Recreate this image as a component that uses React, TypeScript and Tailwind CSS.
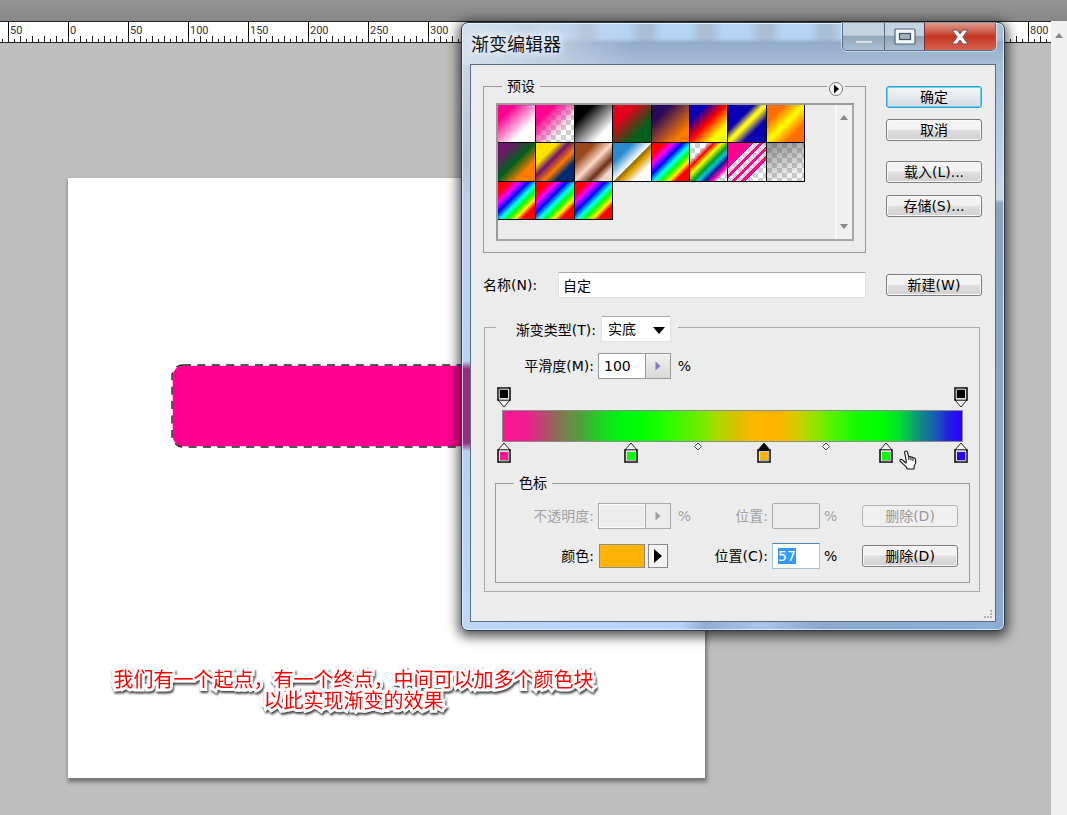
import { useEffect, useRef, type ReactNode } from 'react';

const FONT = 'font-["DejaVu_Sans","Noto_Sans_CJK_SC",sans-serif]';

const RULER = ['50', '0', '50', '100', '150', '200', '250', '300', '', '', '', '', '', '', '', '', '', '800'];

const CHECKER =
  'repeating-conic-gradient(#cfcfcf 0% 25%, #ffffff 0% 50%) 0 0 / 10px 10px';

const SPECTRUM =
  'linear-gradient(135deg,#f00 16%,#f0f 28%,#00f 41%,#0ff 53%,#0f0 63%,#ff0 73%,#f00 82%)';

const PRESETS: { name: string; background: string }[] = [
  { name: '前景色到背景色', background: 'linear-gradient(135deg,#ff0090 22%,#fff 70%)' },
  { name: '前景色到透明', background: `linear-gradient(135deg,#ff0090 24%,rgba(255,0,144,0) 70%), ${CHECKER}` },
  { name: '黑白', background: 'linear-gradient(135deg,#000 24%,#fff 76%)' },
  { name: '红绿', background: 'linear-gradient(135deg,#e2001a 28%,#00601b 72%)' },
  { name: '紫橙', background: 'linear-gradient(135deg,#290a59 24%,#ff7c00 80%)' },
  { name: '蓝红黄', background: 'linear-gradient(135deg,#0a00b2 22%,#ff0000 48%,#fffc00 76%)' },
  { name: '蓝黄蓝', background: 'linear-gradient(135deg,#0a00b2 34%,#fff71c 48% 52%,#0a00b2 70%)' },
  { name: '橙黄橙', background: 'linear-gradient(135deg,#ff6e02 24%,#ffff00 50%,#ff6d00 76%)' },
  { name: '紫绿橙', background: 'linear-gradient(135deg,#6f156c 18%,#00601b 48%,#fd7c00 74%)' },
  { name: '黄紫橙蓝', background: 'linear-gradient(135deg,#ffe200 28%,#6f156c 43%,#fd7c00 60%,#002874 76%)' },
  { name: '铜色', background: 'linear-gradient(135deg,#97461a 26%,#fbd8c5 50%,#6c2e16 70%,#efdbcd 84%)' },
  { name: '铬黄', background: 'linear-gradient(135deg,#298acc 26%,#fff 50%,#906a00 52%,#d99f00 60%,#fff 78%)' },
  { name: '色谱', background: SPECTRUM },
  {
    name: '透明彩虹',
    background: `linear-gradient(135deg,rgba(255,0,0,0) 24%,#f00 32%,#ff0 42%,#00a030 54%,#00c8d8 62%,#0020a0 70%,#f0a 80%,rgba(255,0,160,0) 88%), ${CHECKER}`,
  },
  {
    name: '透明条纹',
    background: `linear-gradient(135deg,#ff0090 34%,transparent 34% 41%,#ff0090 41% 47%,transparent 47% 54%,#ff0090 54% 60%,transparent 60% 67%,#ff0090 67% 73%,transparent 73%), ${CHECKER}`,
  },
  { name: '中灰密度', background: `linear-gradient(160deg,rgba(80,80,80,.6) 5%,rgba(140,140,140,.1) 80%), ${CHECKER}` },
  { name: '色谱 2', background: SPECTRUM },
  { name: '色谱 3', background: SPECTRUM },
  { name: '色谱 4', background: SPECTRUM },
];

const COLOR_STOPS = [
  { at: 0, color: '#ff1493' },
  { at: 27.8, color: '#00ff00' },
  { at: 57, color: '#ffb400', active: true },
  { at: 83.5, color: '#00ff00' },
  { at: 100, color: '#2800ff' },
];

const MIDPOINTS = [42.5, 70.4];

function PushButton({ children, primary, disabled }: { children: ReactNode; primary?: boolean; disabled?: boolean }) {
  const tone = disabled
    ? 'border-[#b4b4b4] bg-[#f0f0f0] text-[#989898]'
    : primary
      ? 'border-[#2f9fd8] bg-linear-to-b from-[#f4f6f7] via-[#e6eaec] to-[#cfdbe2] text-black shadow-[inset_0_0_0_1px_#6fd2f5]'
      : 'border-[#7c7c7c] bg-linear-to-b from-[#f3f3f3] from-45% via-[#e0e0e0] via-50% to-[#d0d0d0] text-black shadow-[inset_0_0_0_1px_#fafafa]';
  return (
    <button type="button" disabled={disabled} className={`flex h-[22px] w-24 items-center justify-center rounded-[3px] border text-sm leading-5 ${tone}`}>
      {children}
    </button>
  );
}

function SpinArrow({ disabled }: { disabled?: boolean }) {
  return (
    <svg viewBox="0 0 6 10" className="h-2.5 w-1.5">
      <path d="M0.5 0.5 L5.5 5 L0.5 9.5 Z" fill={disabled ? '#a0a0a0' : '#7f7fc0'} />
    </svg>
  );
}

function StopMarker({ color, active, flipped }: { color: string; active?: boolean; flipped?: boolean }) {
  return (
    <svg viewBox="0 0 14 21" className={flipped ? 'h-[21px] w-3.5 rotate-180' : 'h-[21px] w-3.5'}>
      <path d="M1 8 L7 1 L13 8 Z" fill={active ? '#000' : '#f4f4f4'} stroke="#222" strokeWidth="1" />
      <rect x="1" y="8" width="12" height="12" fill="#e4e4e4" stroke="#111" strokeWidth="1.6" />
      <path d="M2 8.4 H12" stroke={active ? '#000' : '#aaa'} strokeWidth="1.4" />
      <path d="M3 19 H12 V10" fill="none" stroke="#777" strokeWidth="1" />
      <rect x="3" y="10" width="8" height="8" fill={color} />
    </svg>
  );
}

function Ruler() {
  return (
    <div className="relative flex h-[22px] overflow-hidden border-y border-[#222] bg-white pl-2">
      <div className="absolute inset-x-0 bottom-0 h-[3px] bg-[repeating-linear-gradient(to_right,transparent_0_2px,#222_2px_3px,transparent_3px_6px)]" />
      <div className="absolute inset-x-0 bottom-0 h-1.5 bg-[repeating-linear-gradient(to_right,transparent_0_8px,#222_8px_9px,transparent_9px_12px)]" />
      {RULER.map((label, i) => (
        <span key={i} className='h-full w-15 shrink-0 border-l border-black pl-px font-["Roboto",sans-serif] text-[11px] leading-[18px] text-[#333]'>
          {label}
        </span>
      ))}
    </div>
  );
}

function Artboard() {
  return (
    <section aria-label="画布" className="relative mt-[135px] ml-[68px] h-[600px] w-[637px] bg-white shadow-[1px_3px_4px_1px_rgba(0,0,0,0.4)]">
      <svg className="absolute top-[186px] left-[103px] h-[85px] w-[430px]">
        <rect x="1" y="1" width="428" height="82" rx="11" fill="#ff0092" stroke="#fff" strokeWidth="1.4" />
        <rect x="1" y="1" width="428" height="82" rx="11" fill="none" stroke="#222" strokeWidth="1.4" strokeDasharray="8 6.4" />
      </svg>
      <p
        lang="zh-CN"
        className='absolute top-[490px] left-0 w-[571px] text-center font-["Noto_Sans_CJK_SC",sans-serif] text-xl leading-[21px] text-[#ff0000] drop-shadow-[1px_2px_1px_rgba(0,0,0,0.75)] [-webkit-text-stroke:6px_white] [paint-order:stroke_fill]'
      >
        我们有一个起点，有一个终点，中间可以加多个颜色块
        <br />
        以此实现渐变的效果
      </p>
    </section>
  );
}

function TitleBar() {
  return (
    <header className="flex h-[41px] items-start justify-between">
      <h1 className='pt-2 pl-px font-["Noto_Sans_CJK_SC",sans-serif] text-lg leading-6 text-[#111] [text-shadow:0_0_8px_#fff,0_0_10px_#fff]'>渐变编辑器</h1>
      <div className="flex h-7 overflow-hidden rounded-b-[5px] border border-t-0 border-[#5b6d80] shadow-[0_0_0_1px_rgba(255,255,255,0.45)]">
        <button type="button" aria-label="最小化" className="flex w-[42px] items-end justify-center border-r border-[#5b6d80] bg-linear-to-b from-[#c3d3e2] from-45% via-[#93a7bb] via-50% to-[#aabfd3] pb-1.5">
          <svg viewBox="0 0 18 4" className="h-1 w-[18px]">
            <rect x="0.5" y="0.5" width="17" height="3" fill="#d6dfe8" stroke="#9fb0c0" />
          </svg>
        </button>
        <button type="button" aria-label="最大化" className="flex w-10 items-center justify-center border-r border-[#7b3038] bg-linear-to-b from-[#c3d3e2] from-45% via-[#8fa3b7] via-50% to-[#aabfd3]">
          <svg viewBox="0 0 22 17" className="h-[17px] w-[22px]">
            <rect x="1" y="1" width="20" height="15" rx="1" fill="#f4f6f8" stroke="#56657a" strokeWidth="1.2" />
            <rect x="5.5" y="5.5" width="11" height="6" fill="#a5b0bd" stroke="#445060" strokeWidth="1.2" />
          </svg>
        </button>
        <button type="button" aria-label="关闭" className="flex w-[70px] items-center justify-center bg-linear-to-b from-[#dd9a8e] via-[#c33420] via-50% to-[#d8634e]">
          <svg viewBox="0 0 18 16" className="h-4 w-[18px]">
            <path d="M1 1 H6 L9 5 L12 1 H17 L11.8 8 L17 15 H12 L9 11 L6 15 H1 L6.2 8 Z" fill="#fff" stroke="#6b5560" strokeWidth="1" />
          </svg>
        </button>
      </div>
    </header>
  );
}

function Presets() {
  return (
    <fieldset className="relative min-w-0 flex-1 border border-[#999] pt-1.5 pr-[11px] pb-[11px] pl-3">
      <legend className="ml-1.5 h-[22px] px-[5px] leading-[22px]">预设</legend>
      <button type="button" aria-label="预设菜单" className="absolute -top-4 right-5 flex h-4 w-[18px] items-center justify-center bg-[#ececec]">
        <svg viewBox="0 0 16 16" className="size-4 shrink-0">
          <circle cx="8" cy="8" r="6.5" fill="#f8f8f8" stroke="#777" />
          <path d="M6 3.5 L11 8 L6 12.5 Z" fill="#000" />
        </svg>
      </button>
      <div className="flex h-[138px] justify-between border-2 border-[#a8a8a8] border-t-[#999] border-l-[#999]">
        <div className="grid w-[307px] grid-cols-8 content-start">
          {PRESETS.map((p) => (
            <button
              key={p.name}
              type="button"
              aria-label={p.name}
              className="aspect-square border-r border-b border-black"
              style={{ background: p.background }}
            />
          ))}
        </div>
        <div className="flex w-[17px] flex-col items-center justify-between border-l border-[#f8f8f8] bg-[#f0f0f0] py-2.5">
          <svg viewBox="0 0 8 5" className="h-[5px] w-2">
            <path d="M0 5 L4 0 L8 5 Z" fill="#888" />
          </svg>
          <svg viewBox="0 0 8 5" className="h-[5px] w-2">
            <path d="M0 0 L4 5 L8 0 Z" fill="#888" />
          </svg>
        </div>
      </div>
    </fieldset>
  );
}

function GradientTrack() {
  return (
    <div className="mt-2 mr-4 ml-[17px]">
      <div className="relative mx-0.5 h-[22px]">
        {[0, 100].map((at) => (
          <button key={at} type="button" aria-label={`不透明度色标 ${at}%`} className="absolute top-0 -translate-x-1/2" style={{ left: `${at}%` }}>
            <StopMarker color="#000" flipped />
          </button>
        ))}
      </div>
      <div className="mt-px h-8 border border-[#8a8a8a] bg-[linear-gradient(to_right,#ff1493_0%,#f01c90_5%,#80774f_12.6%,#48a83c_17.6%,#20d020_21%,#00f410_25%,#00ff00_30%,#22ff00_35%,#6eec00_43%,#aadc00_46.6%,#d8c000_50.5%,#ffb800_55%,#ffb400_60%,#d4cc00_64%,#90e400_68%,#50f400_72%,#14fc00_77%,#00ff00_82%,#00e030_86.3%,#109080_90.6%,#1860b0_94%,#2420e0_97%,#2800ff_100%)]" />
      <div className="relative mx-0.5 h-[23px]">
        {COLOR_STOPS.map((s) => (
          <button key={s.at} type="button" aria-label={`颜色色标 ${s.at}%`} className="absolute top-0 -translate-x-1/2" style={{ left: `${s.at}%` }}>
            <StopMarker color={s.color} active={s.active} />
          </button>
        ))}
        {MIDPOINTS.map((at) => (
          <button key={at} type="button" aria-label={`中点 ${at}%`} className="absolute top-0 -translate-x-1/2" style={{ left: `${at}%` }}>
            <svg viewBox="0 0 9 9" className="size-[9px]">
              <path d="M4.5 1 L8 4.5 L4.5 8 L1 4.5 Z" fill="#fff" stroke="#444" />
            </svg>
          </button>
        ))}
        <svg viewBox="0 0 18 20" className="absolute top-2 left-[395px] h-5 w-[18px]">
          <path
            d="M7.2 10.5 L5.6 2.6 Q5.6 1 7 1 Q8.2 1 8.6 2.6 L9.8 7 Q10.6 5.8 11.8 7.2 Q13 6.4 14 8 Q15.6 7.2 16.6 9.6 Q17.4 13 15.2 16 L15 19 H8 L7.6 17.2 L1.2 11.4 Q0.4 9.8 1.8 9.4 Q3 9.2 4.6 11 L7.2 13 Z"
            fill="#fff"
            stroke="#111"
            strokeWidth="1.1"
            strokeLinejoin="round"
          />
          <path d="M9.8 7 V10 M12 7.4 V10.4 M14 8.2 V10.8" stroke="#111" strokeWidth="1" fill="none" />
        </svg>
      </div>
    </div>
  );
}

const ROW = 'grid h-[26px] grid-cols-[98px_73px_16px_73px_48px_34px_96px] items-center gap-x-1 leading-5';

function StopsPanel() {
  const position = useRef<HTMLInputElement>(null);
  useEffect(() => {
    position.current?.focus({ preventScroll: true });
    position.current?.select();
  }, []);
  return (
    <fieldset className="mt-[7px] mr-[9px] ml-2.5 min-w-0 border border-[#999] pt-[9px] pb-[13px]">
      <legend className="ml-[18px] h-[22px] px-[5px] leading-[22px]">色标</legend>
      <div className={`${ROW} text-[#a3a3a3]`}>
        <label htmlFor="opacity" className="text-right">不透明度:</label>
        <div className="flex h-[26px] border border-[#aaa]">
          <input id="opacity" disabled className="w-[46px] border border-[#f8f8f8] bg-[#ececec]" />
          <button type="button" disabled aria-label="调整不透明度" className="flex flex-1 items-center justify-center border-l border-[#aaa]">
            <SpinArrow disabled />
          </button>
        </div>
        <span className="text-right">%</span>
        <label htmlFor="opacity-position" className="text-right">位置:</label>
        <input id="opacity-position" disabled className="h-[26px] w-full rounded-[2px] border border-[#aaa] bg-[#ececec]" />
        <span>%</span>
        <PushButton disabled>删除(D)</PushButton>
      </div>
      <div className={`${ROW} mt-3.5`}>
        <label htmlFor="color" className="text-right">颜色:</label>
        <div className="flex h-6 gap-[3px] pl-px">
          <button id="color" type="button" aria-label="颜色" className="w-[46px] border border-[#8c8c8c] bg-[#ffb405]" />
          <button type="button" aria-label="颜色菜单" className="flex w-5 items-center justify-center border border-[#888] bg-[#f4f4f4]">
            <svg viewBox="0 0 8 14" className="h-3.5 w-2">
              <path d="M0 0 L8 7 L0 14 Z" fill="#000" />
            </svg>
          </button>
        </div>
        <label htmlFor="position" className="col-span-2 text-right">位置(C):</label>
        <input
          id="position"
          ref={position}
          defaultValue="57"
          className="h-[26px] w-full border border-[#a9c4da] border-t-[#4a86b4] bg-white pl-[5px] outline-none selection:bg-[#3399ff] selection:text-white"
        />
        <span>%</span>
        <PushButton>删除(D)</PushButton>
      </div>
    </fieldset>
  );
}

function GradientEditor() {
  return (
    <div
      role="dialog"
      aria-label="渐变编辑器"
      className="absolute top-[22px] left-[461px] w-[544px] rounded-[7px] border border-[#2c3a48] px-2 pb-2 text-sm text-black shadow-[inset_0_0_0_1px_rgba(240,248,255,0.75),0_3px_12px_3px_rgba(0,0,0,0.65)] [background:linear-gradient(#c8d6e5_0,#b5c7da_100px,#bdd3ef_140px,#b8d2f4_296px,#91307a_304px,#91307a_378px,#b6d0f4_386px,#c0daf8)_0_42px/9px_100%_no-repeat,linear-gradient(#a9bfd8_0,#bdd0e4_90px,#cdd9e6_134px,#8ba3bf_138px,#8eaacb_400px,#8aabd2)_100%_42px/9px_100%_no-repeat,linear-gradient(to_right,#bcd7f6_0,#b4d3fa_220px,#8eaed2_242px,#a6c6ea_300px,#88a8cc_360px,#8db0d8)_0_100%/100%_9px_no-repeat,linear-gradient(to_right,rgba(214,226,238,0.95)_0,rgba(200,216,232,0.6)_100px,transparent_170px),linear-gradient(transparent_15px,#93abc9_20px,#a9bfd9_42px),repeating-linear-gradient(to_right,#a9bdd3_0_8px,#b7d4f4_20px_46px,#a9bdd3_60px)]"
    >
      <TitleBar />
      <div className="relative border border-[#5d6c7c] bg-[#ececec] pt-2.5 pr-[13px] pb-[29px] pl-3">
        <div className="flex gap-5">
          <Presets />
          <div className="flex flex-col pt-[11px]">
            <PushButton primary>确定</PushButton>
            <div className="mt-[11px]"><PushButton>取消</PushButton></div>
            <div className="mt-5"><PushButton>载入(L)...</PushButton></div>
            <div className="mt-3"><PushButton>存储(S)...</PushButton></div>
          </div>
        </div>
        <div className="mt-[19px] flex h-[26px] items-center">
          <label htmlFor="name" className="w-[75px] leading-5">名称(N):</label>
          <input id="name" defaultValue="自定" className="h-[26px] min-w-0 flex-1 border border-[#e2e2e2] border-t-[#aaa] bg-white pl-1" />
          <div className="ml-5"><PushButton>新建(W)</PushButton></div>
        </div>
        <fieldset className="mt-[18px] mr-0.5 ml-px min-w-0 border border-[#aaa] pb-2">
          <legend className="ml-[11px] flex h-[22px] items-start pr-[7px]">
            <label htmlFor="kind" className="w-[100px] text-right leading-[28px]">渐变类型(T):</label>
            <span className="relative ml-[5px] flex">
              <select id="kind" defaultValue="solid" className="h-[26px] w-[70px] appearance-none border border-[#e2e2e2] border-t-[#aaa] bg-white pl-1.5">
                <option value="solid">实底</option>
                <option value="noise">杂色</option>
              </select>
              <svg viewBox="0 0 12 7" className="pointer-events-none absolute top-[11px] right-1.5 h-[7px] w-3">
                <path d="M0 0 H12 L6 7 Z" fill="#000" />
              </svg>
            </span>
          </legend>
          <div className="mt-[15px] ml-[11px] flex h-[26px] items-center gap-1 leading-5">
            <label htmlFor="smooth" className="w-[98px] text-right">平滑度(M):</label>
            <div className="flex h-[26px] w-[73px] border border-[#999]">
              <input id="smooth" defaultValue="100" className="w-[46px] bg-white pl-[5px]" />
              <button type="button" aria-label="调整平滑度" className="flex flex-1 items-center justify-center border-l border-[#999] bg-linear-to-b from-[#f2f2f2] to-[#d8d8d8]">
                <SpinArrow />
              </button>
            </div>
            <span className="w-4 text-right">%</span>
          </div>
          <GradientTrack />
          <StopsPanel />
        </fieldset>
        <svg viewBox="0 0 10 10" className="absolute right-0.5 bottom-0.5 size-2.5">
          <path d="M7 1h2v2h-2z M7 4h2v2h-2z M4 7h2v2h-2z M7 7h2v2h-2z M1 7h2v2h-2z" fill="#b4b4b4" />
        </svg>
      </div>
    </div>
  );
}

export default function App() {
  return (
    <main lang="zh-CN" className={`relative flex min-h-screen flex-col overflow-hidden bg-[#bebebe] ${FONT}`}>
      <div className="h-[21px] bg-linear-to-b from-[#949494] to-[#868686]" />
      <div className="flex flex-1">
        <div className="min-w-0 flex-1">
          <Ruler />
          <Artboard />
        </div>
        <div className="flex w-4 justify-center bg-[#f0f0f0] pt-3">
          <svg viewBox="0 0 8 5" className="h-[5px] w-2">
            <path d="M0 5 L4 0 L8 5 Z" fill="#888" />
          </svg>
        </div>
      </div>
      <GradientEditor />
    </main>
  );
}
